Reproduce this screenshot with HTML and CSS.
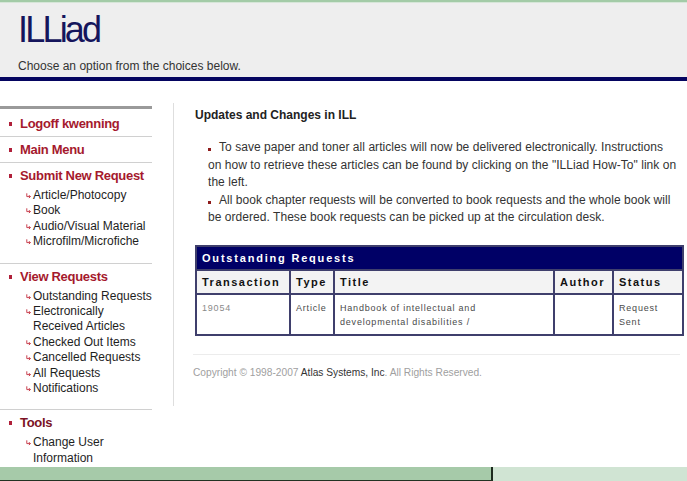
FILE: index.html
```html
<!DOCTYPE html>
<html>
<head>
<meta charset="utf-8">
<title>ILLiad</title>
<link rel="stylesheet" href="styles.css">
</head>
<body>
<div class="topline"></div>
<header class="header">
  <h1 class="logo">ILLiad</h1>
  <p class="tagline">Choose an option from the choices below.</p>
</header>
<div class="layout">
  <nav class="sidebar">
    <div class="nav-bar"></div>
    <section class="nav-sec first">
      <div class="nav-head"><span class="sq"></span><span>Logoff kwenning</span></div>
    </section>
    <section class="nav-sec">
      <div class="nav-head"><span class="sq"></span><span>Main Menu</span></div>
    </section>
    <section class="nav-sec">
      <div class="nav-head"><span class="sq"></span><span>Submit New Request</span></div>
      <ul class="sub">
        <li><svg class="arr" viewBox="0 0 5 6"><path d="M0.8 0.3V3.6H4.4M2.9 2.1L4.4 3.6L2.9 5.1"/></svg><span>Article/Photocopy</span></li>
        <li><svg class="arr" viewBox="0 0 5 6"><path d="M0.8 0.3V3.6H4.4M2.9 2.1L4.4 3.6L2.9 5.1"/></svg><span>Book</span></li>
        <li><svg class="arr" viewBox="0 0 5 6"><path d="M0.8 0.3V3.6H4.4M2.9 2.1L4.4 3.6L2.9 5.1"/></svg><span>Audio/Visual Material</span></li>
        <li><svg class="arr" viewBox="0 0 5 6"><path d="M0.8 0.3V3.6H4.4M2.9 2.1L4.4 3.6L2.9 5.1"/></svg><span>Microfilm/Microfiche</span></li>
      </ul>
    </section>
    <section class="nav-sec">
      <div class="nav-head"><span class="sq"></span><span>View Requests</span></div>
      <ul class="sub">
        <li><svg class="arr" viewBox="0 0 5 6"><path d="M0.8 0.3V3.6H4.4M2.9 2.1L4.4 3.6L2.9 5.1"/></svg><span>Outstanding Requests</span></li>
        <li><svg class="arr" viewBox="0 0 5 6"><path d="M0.8 0.3V3.6H4.4M2.9 2.1L4.4 3.6L2.9 5.1"/></svg><span>Electronically Received Articles</span></li>
        <li><svg class="arr" viewBox="0 0 5 6"><path d="M0.8 0.3V3.6H4.4M2.9 2.1L4.4 3.6L2.9 5.1"/></svg><span>Checked Out Items</span></li>
        <li><svg class="arr" viewBox="0 0 5 6"><path d="M0.8 0.3V3.6H4.4M2.9 2.1L4.4 3.6L2.9 5.1"/></svg><span>Cancelled Requests</span></li>
        <li><svg class="arr" viewBox="0 0 5 6"><path d="M0.8 0.3V3.6H4.4M2.9 2.1L4.4 3.6L2.9 5.1"/></svg><span>All Requests</span></li>
        <li><svg class="arr" viewBox="0 0 5 6"><path d="M0.8 0.3V3.6H4.4M2.9 2.1L4.4 3.6L2.9 5.1"/></svg><span>Notifications</span></li>
      </ul>
    </section>
    <section class="nav-sec last">
      <div class="nav-head tools"><span class="sq"></span><span>Tools</span></div>
      <ul class="sub">
        <li><svg class="arr" viewBox="0 0 5 6"><path d="M0.8 0.3V3.6H4.4M2.9 2.1L4.4 3.6L2.9 5.1"/></svg><span>Change User Information</span></li>
      </ul>
    </section>
  </nav>
  <main class="main">
    <h2 class="title">Updates and Changes in ILL</h2>
    <div class="news">
      <p><span class="dot"></span>To save paper and toner all articles will now be delivered electronically. Instructions on how to retrieve these articles can be found by clicking on the "ILLiad How-To" link on the left.</p>
      <p><span class="dot"></span>All book chapter requests will be converted to book requests and the whole book will be ordered. These book requests can be picked up at the circulation desk.</p>
    </div>
    <table class="req">
      <colgroup>
        <col class="c-tx"><col class="c-type"><col class="c-title"><col class="c-author"><col class="c-status">
      </colgroup>
      <tr class="cap"><th colspan="5">Outstanding Requests</th></tr>
      <tr class="hd"><th>Transaction</th><th>Type</th><th>Title</th><th>Author</th><th>Status</th></tr>
      <tr class="row"><td class="num">19054</td><td>Article</td><td>Handbook of intellectual and developmental disabilities /</td><td></td><td>Request Sent</td></tr>
    </table>
    <hr class="rule">
    <p class="copy">Copyright © 1998-2007 <span class="co">Atlas Systems, Inc</span>. All Rights Reserved.</p>
  </main>
</div>
<div class="taskbar"><div class="tb-left"></div><div class="tb-right"></div></div>
</body>
</html>
```
FILE: styles.css
```css
html, body {
  margin: 0;
  padding: 0;
  background: #ffffff;
  font-family: "Liberation Sans", Arial, sans-serif;
  width: 687px;
  height: 481px;
  overflow: hidden;
}

.topline {
  height: 2px;
  background: #a3cba7;
  border-bottom: 1px solid #d6e6d8;
}

.header {
  background: #eeeeee;
  padding: 9px 18px 4px;
  border-bottom: 4px solid #050560;
}

.logo {
  margin: 0;
  font-size: 36px;
  line-height: 36px;
  font-weight: normal;
  color: #15155c;
  letter-spacing: -2.8px;
}

.tagline {
  margin: 11px 0 0;
  font-size: 12px;
  line-height: 14px;
  color: #333333;
}

.layout {
  display: flex;
  align-items: flex-start;
}

.sidebar {
  width: 152px;
  flex: none;
  padding-top: 25px;
}

.nav-bar {
  height: 3px;
  background: #9a9a9a;
}

.nav-sec {
  padding: 5px 0 4px;
  border-bottom: 1px solid #d0d0d0;
}

.nav-sec.first {
  margin-top: 2px;
}

.nav-sec.last {
  border-bottom: none;
  padding-bottom: 1px;
}

.nav-head {
  display: flex;
  align-items: center;
  font-size: 13px;
  line-height: 16px;
  font-weight: bold;
  color: #a5192d;
  letter-spacing: -0.3px;
}

.nav-head.tools {
  color: #7c1324;
}

.sq {
  width: 3px;
  height: 4px;
  background: #b0203a;
  margin: 0 8px 0 9px;
  flex: none;
}

.sub {
  list-style: none;
  margin: 4px 0 9px;
  padding: 0;
}

.nav-sec.last .sub {
  margin-bottom: 0;
}

.sub li {
  display: flex;
  align-items: flex-start;
  font-size: 12px;
  line-height: 15.4px;
  color: #1e1e1e;
}

.arr {
  width: 5px;
  height: 6px;
  flex: none;
  margin: 5px 2px 0 26px;
  fill: none;
  stroke: #c8404f;
  stroke-width: 1;
}

.main {
  flex: none;
  width: 487px;
  margin: 22px 0 0 21px;
  padding: 5px 5px 26px 21px;
  border-left: 1px solid #dedede;
}

.title {
  margin: 0;
  font-size: 12px;
  line-height: 14px;
  font-weight: bold;
  color: #222222;
}

.news {
  margin: 17px 4px 0 13px;
  font-size: 12px;
  line-height: 17.5px;
  letter-spacing: 0.046px;
  color: #333333;
}

.news p {
  margin: 0;
}

.dot {
  display: inline-block;
  width: 3px;
  height: 3px;
  background: #8e1b1b;
  margin-right: 8px;
}

.req {
  margin-top: 18px;
  width: 487px;
  table-layout: fixed;
  border-collapse: collapse;
  font-family: "Liberation Sans", Arial, sans-serif;
}

.c-tx { width: 94px; }
.c-type { width: 44px; }
.c-title { width: 220px; }
.c-author { width: 59px; }
.c-status { width: 70px; }

.req th, .req td {
  border: 2px solid #3f3f6c;
  text-align: left;
  padding: 0 5px;
}

.cap th {
  background: #000066;
  color: #ffffff;
  font-size: 11px;
  font-weight: bold;
  letter-spacing: 1.8px;
  height: 22px;
  line-height: 14px;
}

.hd th {
  background: #f3f3f3;
  color: #111111;
  font-size: 11px;
  font-weight: bold;
  letter-spacing: 1.5px;
  height: 22px;
  line-height: 14px;
}

.row td {
  vertical-align: top;
  font-size: 9px;
  letter-spacing: 0.8px;
  line-height: 14px;
  color: #4a4a4a;
  padding-top: 6px;
  padding-bottom: 5px;
}

.row td.num {
  color: #8a8a8a;
}

.rule {
  margin: 18px 2px 0 -2px;
  border: none;
  border-top: 1px solid #ececec;
  height: 0;
}

.copy {
  margin: 11px 0 0 -2px;
  font-size: 10.2px;
  line-height: 14px;
  color: #a0a0a0;
}

.co {
  color: #333333;
}

.taskbar {
  display: flex;
  height: 14px;
}

.tb-left {
  width: 491px;
  background: #a6caa9;
  border-right: 2px solid #1c2a1e;
  border-bottom: 1px solid #223322;
}

.tb-right {
  flex: 1;
  background: #d0e4d3;
}
```
